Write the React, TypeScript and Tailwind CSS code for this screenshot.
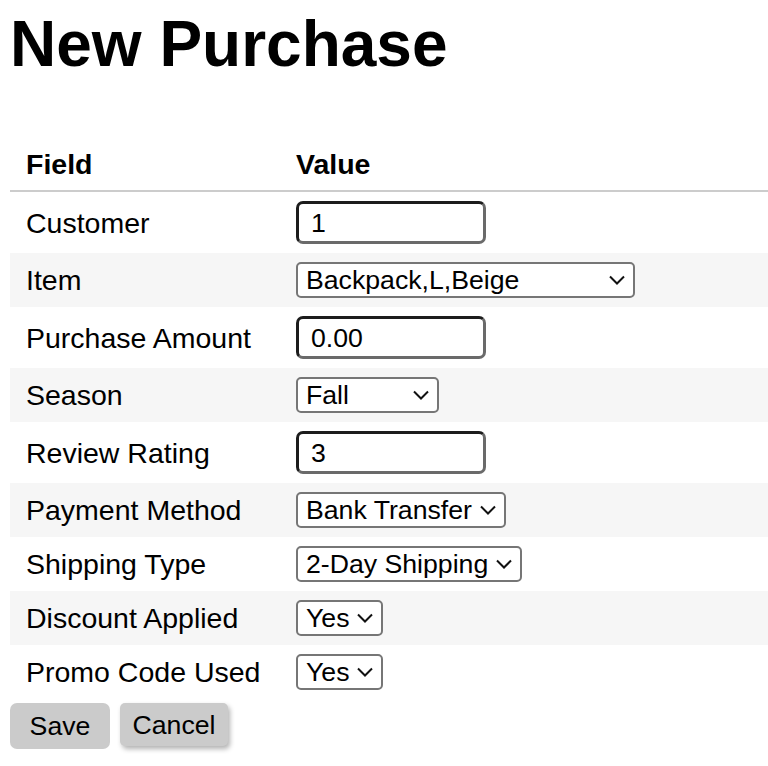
import React from 'react';

type Row = {
  label: string;
  kind: 'input' | 'select';
  value: string;
  width: string;
};

const rows: Row[] = [
  { label: 'Customer', kind: 'input', value: '1', width: 'w-[190px]' },
  { label: 'Item', kind: 'select', value: 'Backpack,L,Beige', width: 'w-[339px]' },
  { label: 'Purchase Amount', kind: 'input', value: '0.00', width: 'w-[190px]' },
  { label: 'Season', kind: 'select', value: 'Fall', width: 'w-[143px]' },
  { label: 'Review Rating', kind: 'input', value: '3', width: 'w-[190px]' },
  { label: 'Payment Method', kind: 'select', value: 'Bank Transfer', width: 'w-auto' },
  { label: 'Shipping Type', kind: 'select', value: '2-Day Shipping', width: 'w-auto' },
  { label: 'Discount Applied', kind: 'select', value: 'Yes', width: 'w-auto' },
  { label: 'Promo Code Used', kind: 'select', value: 'Yes', width: 'w-auto' },
];

function Chevron() {
  return (
    <svg width="16" height="10" viewBox="0 0 16 10" className="shrink-0">
      <path d="M1 1.5 L8 8.5 L15 1.5" fill="none" stroke="#111" strokeWidth="2" />
    </svg>
  );
}

function Field({ row }: { row: Row }) {
  if (row.kind === 'input') {
    return (
      <div
        className={`${row.width} h-[43px] flex items-center pl-[12px] rounded-[7px] border-[3px] border-t-[#1c1c1c] border-l-[#1c1c1c] border-b-[#6a6a6a] border-r-[#6a6a6a] bg-white text-[26.67px]`}
      >
        {row.value}
      </div>
    );
  }
  return (
    <div
      className={`${row.width} inline-flex h-[36px] items-center justify-between gap-[8px] pl-[8px] pr-[8px] rounded-[5px] border-2 border-[#767676] bg-white text-[26.67px]`}
    >
      <span className="whitespace-nowrap">{row.value}</span>
      <Chevron />
    </div>
  );
}

export default function App() {
  return (
    <div className="min-h-screen bg-white text-black font-['Liberation_Sans',Arial,sans-serif] overflow-hidden">
      <h1 className="text-[64px] font-bold leading-none pt-3 pl-[10px]">New Purchase</h1>

      <table className="mt-16 ml-[10px] w-[800px] border-collapse text-[28.5px] leading-[32px]">
        <thead>
          <tr className="border-b-2 border-[#cccccc]">
            <th className="w-[270px] pl-4 pt-2 pb-[10px] text-left font-bold">Field</th>
            <th className="pl-4 pt-2 pb-[10px] text-left font-bold">Value</th>
          </tr>
        </thead>
        <tbody>
          {rows.map((row, i) => (
            <tr key={row.label} className={i % 2 === 1 ? 'bg-[#f6f6f6]' : ''}>
              <td className="pl-4 py-[9px] align-middle whitespace-nowrap">{row.label}</td>
              <td className="pl-4 py-[9px] align-middle">
                <Field row={row} />
              </td>
            </tr>
          ))}
        </tbody>
      </table>

      <div className="flex items-start gap-[10px] ml-[10px] mt-1 text-[26.67px]">
        <button className="w-[100px] h-[46px] rounded-[7px] bg-[#cbcbcb]">Save</button>
        <button className="w-[108px] h-[43px] rounded-[5px] bg-[#cbcbcb] shadow-[2px_3px_5px_rgba(0,0,0,0.3)]">
          Cancel
        </button>
      </div>
    </div>
  );
}
